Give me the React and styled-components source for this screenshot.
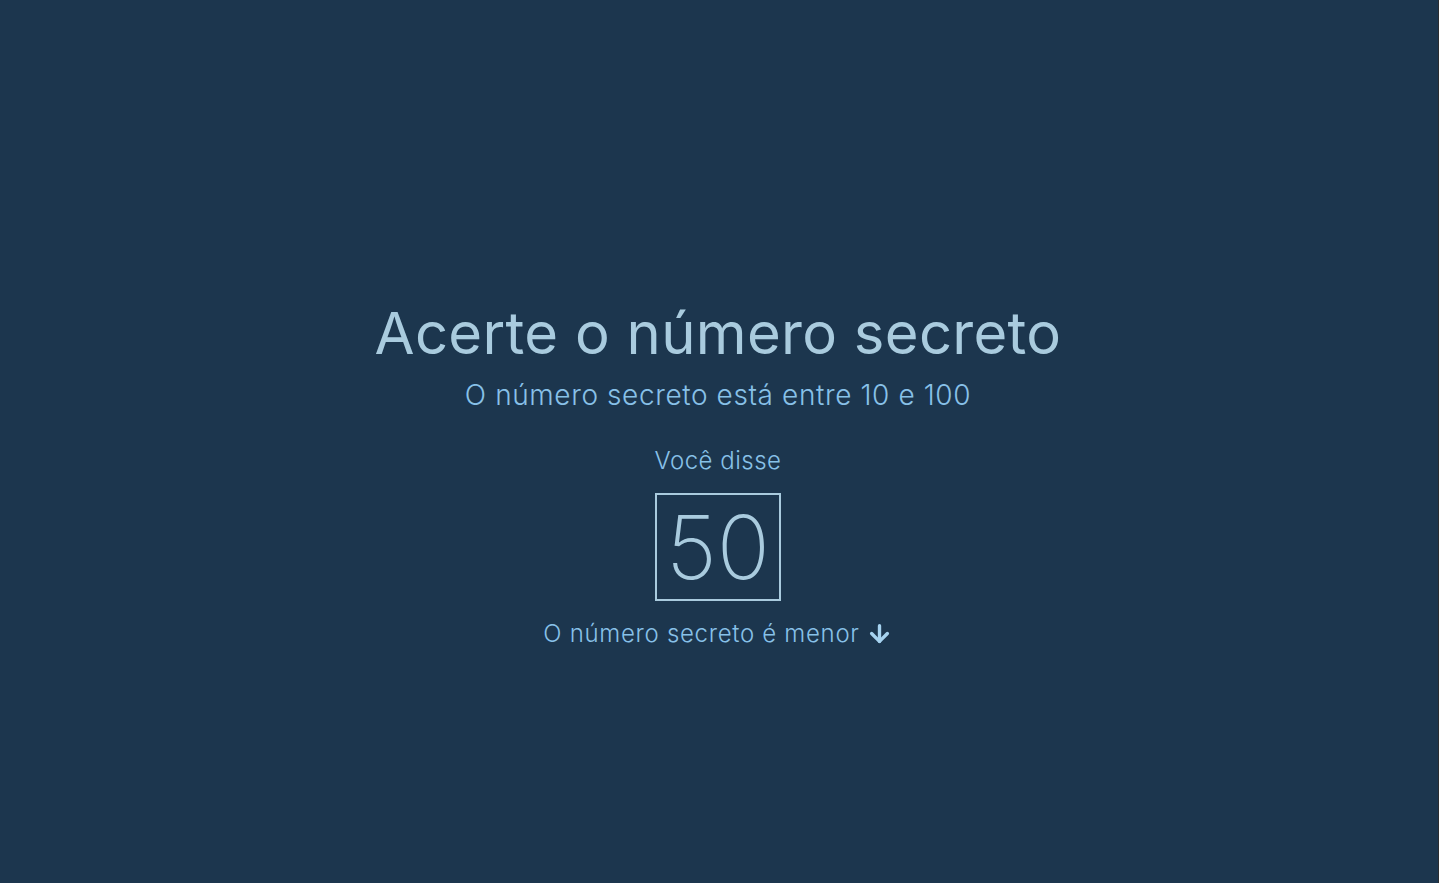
import styled, { createGlobalStyle } from "styled-components";
import { ArrowDown } from "lucide-react";

const GlobalStyle = createGlobalStyle`
  html, body {
    margin: 0;
    padding: 0;
    background: #1c364e;
  }
  body {
    font-family: "Inter", "Lato", sans-serif;
  }
`;

const Page = styled.main`
  min-height: 100vh;
  display: flex;
  flex-direction: column;
  align-items: center;
  justify-content: center;
  background: #1c364e;
  padding: 64px 2px 0 0;
  border-right: 1px solid #2b2d30;
  box-sizing: border-box;
`;

const Title = styled.h1`
  margin: 0;
  font-size: 58px;
  font-weight: 400;
  color: #a9cbde;
  letter-spacing: 0.3px;
  line-height: 1.2;
`;

const Subtitle = styled.p`
  margin: 8px 0 0;
  font-size: 28px;
  font-weight: 300;
  color: #88c1e8;
  letter-spacing: 0.6px;
  line-height: 1.3;
`;

const Said = styled.p`
  margin: 33px 0 18px;
  font-size: 24px;
  font-weight: 300;
  color: #88c1e8;
  letter-spacing: 0.5px;
`;

const GuessBox = styled.div`
  width: 126px;
  height: 108px;
  box-sizing: border-box;
  border: 2px solid #a9cbde;
  display: flex;
  align-items: center;
  justify-content: center;
  font-size: 88px;
  font-weight: 200;
  color: #a9cbde;
`;

const Hint = styled.p`
  margin: 18px 0 0;
  display: flex;
  align-items: center;
  gap: 6px;
  font-size: 24px;
  font-weight: 300;
  color: #88c1e8;
  letter-spacing: 0.7px;
`;

export default function App() {
  return (
    <>
      <GlobalStyle />
      <Page>
        <Title>Acerte o número secreto</Title>
        <Subtitle>O número secreto está entre 10 e 100</Subtitle>
        <Said>Você disse</Said>
        <GuessBox>50</GuessBox>
        <Hint>
          O número secreto é menor
          <ArrowDown size={27} strokeWidth={3} color="#a6d3f0" />
        </Hint>
      </Page>
    </>
  );
}
